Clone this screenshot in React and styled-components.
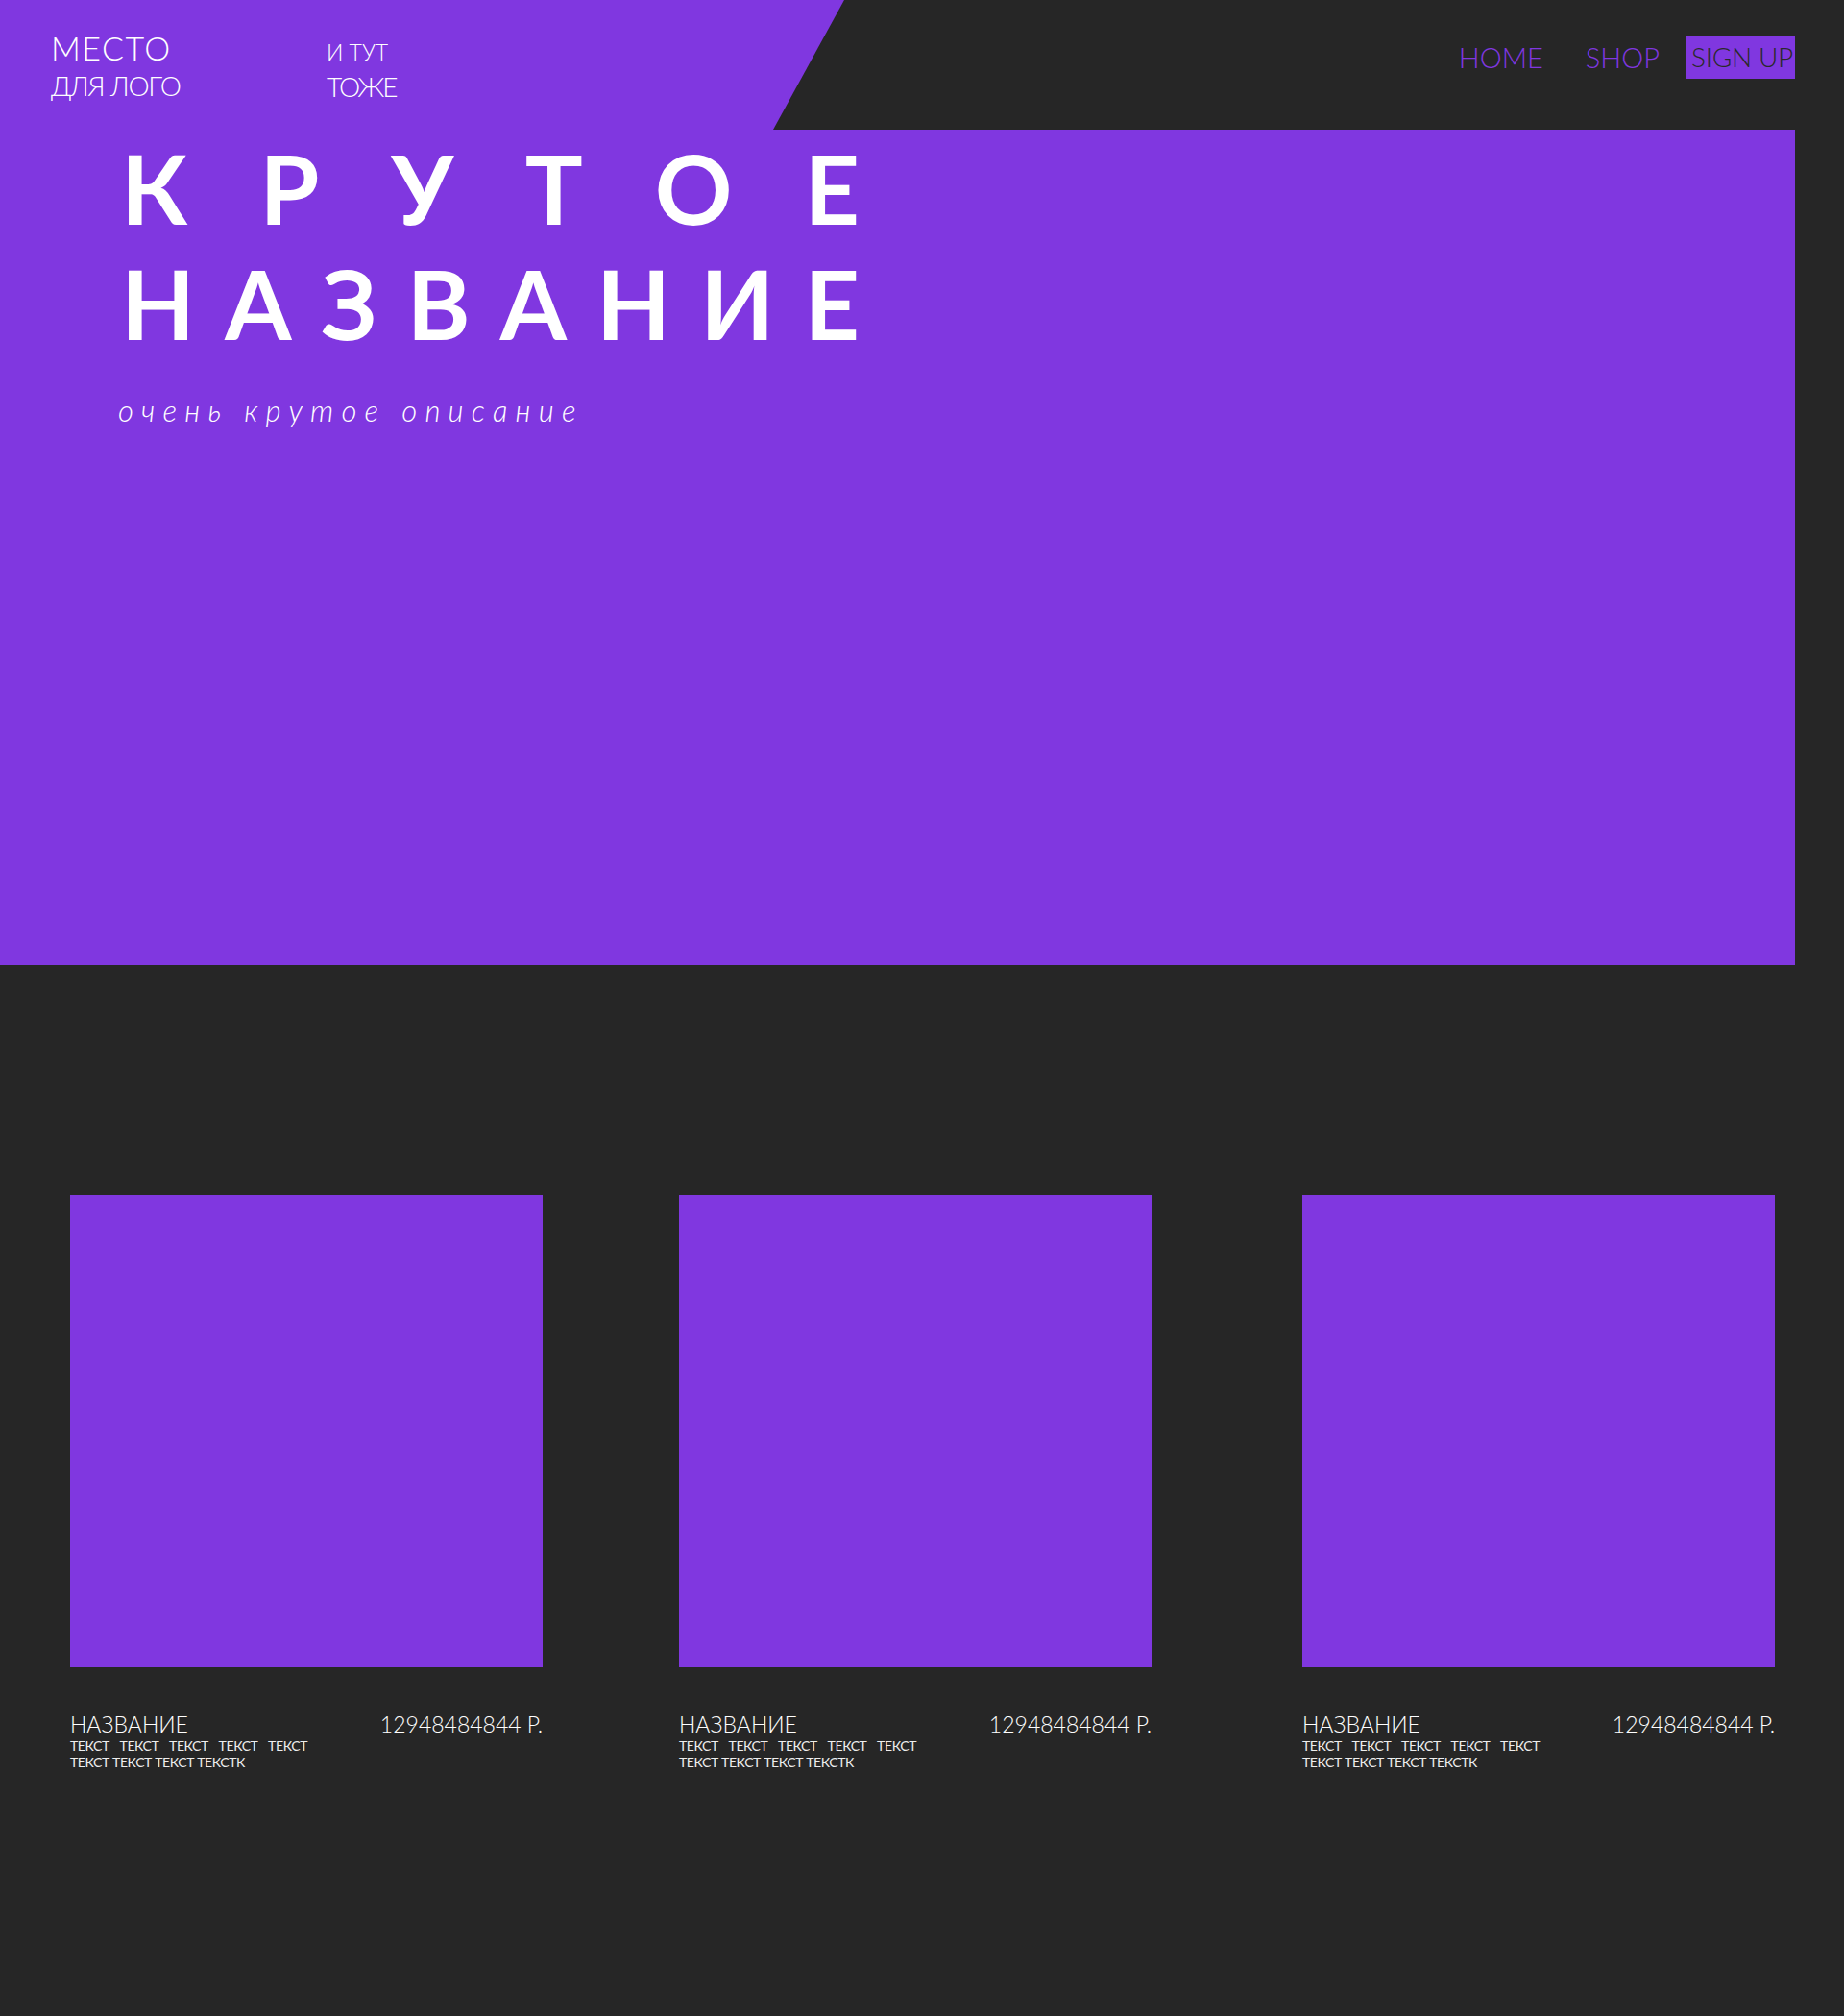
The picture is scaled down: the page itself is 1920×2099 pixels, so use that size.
import React from "react";
import styled, { createGlobalStyle } from "styled-components";

const PURPLE = "#8037e0";
const DARK = "#262626";

const GlobalStyle = createGlobalStyle`
  html, body {
    margin: 0;
    padding: 0;
    background: ${DARK};
  }
  body {
    font-family: Lato, "Noto Sans", sans-serif;
    color: #fff;
  }
  * {
    box-sizing: border-box;
  }
`;

const products = [
  { id: 1, shift: 0 },
  { id: 2, shift: 0 },
  { id: 3, shift: 15 },
];

function App() {
  return (
    <Page>
      <GlobalStyle />
      <Header>
        <LogoBlock>
          <LogoBig>МЕСТО</LogoBig>
          <LogoSmall $mt={2} $ls={-1.2}>ДЛЯ ЛОГО</LogoSmall>
        </LogoBlock>
        <SecondBlock>
          <SecondTop>И ТУТ</SecondTop>
          <LogoSmall $mt={1} $ls={-2}>ТОЖЕ</LogoSmall>
        </SecondBlock>
        <Nav>
          <NavLink>HOME</NavLink>
          <NavLink>SHOP</NavLink>
          <SignUp>SIGN UP</SignUp>
        </Nav>
      </Header>
      <Hero>
        <TitleLine>
          {"КРУТОЕ".split("").map((ch, i) => (
            <span key={i}>{ch}</span>
          ))}
        </TitleLine>
        <TitleLine>
          {"НАЗВАНИЕ".split("").map((ch, i) => (
            <span key={i}>{ch}</span>
          ))}
        </TitleLine>
        <Subtitle>очень крутое описание</Subtitle>
      </Hero>
      <Products>
        {products.map((p) => (
          <Card key={p.id} $shift={p.shift}>
            <CardImage />
            <CardHead>
              <CardName>НАЗВАНИЕ</CardName>
              <CardPrice>12948484844 Р.</CardPrice>
            </CardHead>
            <CardText>
              ТЕКСТ ТЕКСТ ТЕКСТ ТЕКСТ ТЕКСТ ТЕКСТ ТЕКСТ ТЕКСТ ТЕКСТК
            </CardText>
          </Card>
        ))}
      </Products>
    </Page>
  );
}

export default App;

const Page = styled.div`
  width: 1920px;
  min-height: 2099px;
  background: ${DARK};
  overflow: hidden;
`;

const Header = styled.header`
  position: relative;
  height: 135px;
  display: flex;
  align-items: flex-start;
  padding-left: 53px;
  padding-right: 51px;

  &::before {
    content: "";
    position: absolute;
    inset: 0;
    background: ${PURPLE};
    clip-path: polygon(0 0, 879px 0, 805px 100%, 0 100%);
  }
`;

const LogoBlock = styled.div`
  position: relative;
  display: flex;
  flex-direction: column;
  padding-top: 30px;
  width: 287px;
`;

const SecondBlock = styled.div`
  position: relative;
  display: flex;
  flex-direction: column;
  padding-top: 36px;
`;

const LogoBig = styled.div`
  font-size: 34px;
  font-weight: 300;
  line-height: 40px;
  letter-spacing: 1.5px;
`;

const LogoSmall = styled.div`
  font-size: 28px;
  font-weight: 300;
  line-height: 34px;
  margin-top: ${(p) => p.$mt || 0}px;
  letter-spacing: ${(p) => p.$ls || 0}px;
`;

const SecondTop = styled.div`
  font-size: 23px;
  font-weight: 300;
  line-height: 36px;
`;

const Nav = styled.nav`
  position: relative;
  margin-left: auto;
  margin-top: 37px;
  display: flex;
  align-items: center;
  gap: 44px;
`;

const NavLink = styled.a`
  font-size: 29px;
  font-weight: 300;
  color: ${PURPLE};
  line-height: 45px;
  cursor: pointer;
`;

const SignUp = styled.a`
  font-size: 28px;
  font-weight: 300;
  color: #2a2a2a;
  background: ${PURPLE};
  height: 45px;
  line-height: 45px;
  padding: 0 2px 0 6px;
  margin-left: -17px;
  letter-spacing: -0.3px;
  cursor: pointer;
`;

const Hero = styled.section`
  width: 1869px;
  height: 870px;
  background: ${PURPLE};
  padding-left: 126px;
`;

const TitleLine = styled.h1`
  margin: 0;
  width: 769px;
  display: flex;
  justify-content: space-between;
  font-size: 100px;
  font-weight: 700;
  line-height: 120px;
  color: #fff;
`;

const Subtitle = styled.p`
  margin: 32px 0 0 -3px;
  font-size: 31px;
  font-weight: 300;
  font-style: italic;
  letter-spacing: 8.2px;
  line-height: 40px;
`;

const Products = styled.section`
  display: flex;
  gap: 142px;
  padding: 239px 0 0 73px;
`;

const Card = styled.article`
  width: 492px;
  margin-left: ${(p) => p.$shift}px;
`;

const CardImage = styled.div`
  width: 492px;
  height: 492px;
  background: ${PURPLE};
`;

const CardHead = styled.div`
  display: flex;
  justify-content: space-between;
  margin-top: 45px;
  font-size: 23px;
  font-weight: 300;
  line-height: 28px;
`;

const CardName = styled.span``;

const CardPrice = styled.span``;

const CardText = styled.p`
  margin: 0;
  width: 247px;
  text-align: justify;
  font-size: 14px;
  line-height: 17px;
  letter-spacing: -0.4px;
  color: #eee;
`;
